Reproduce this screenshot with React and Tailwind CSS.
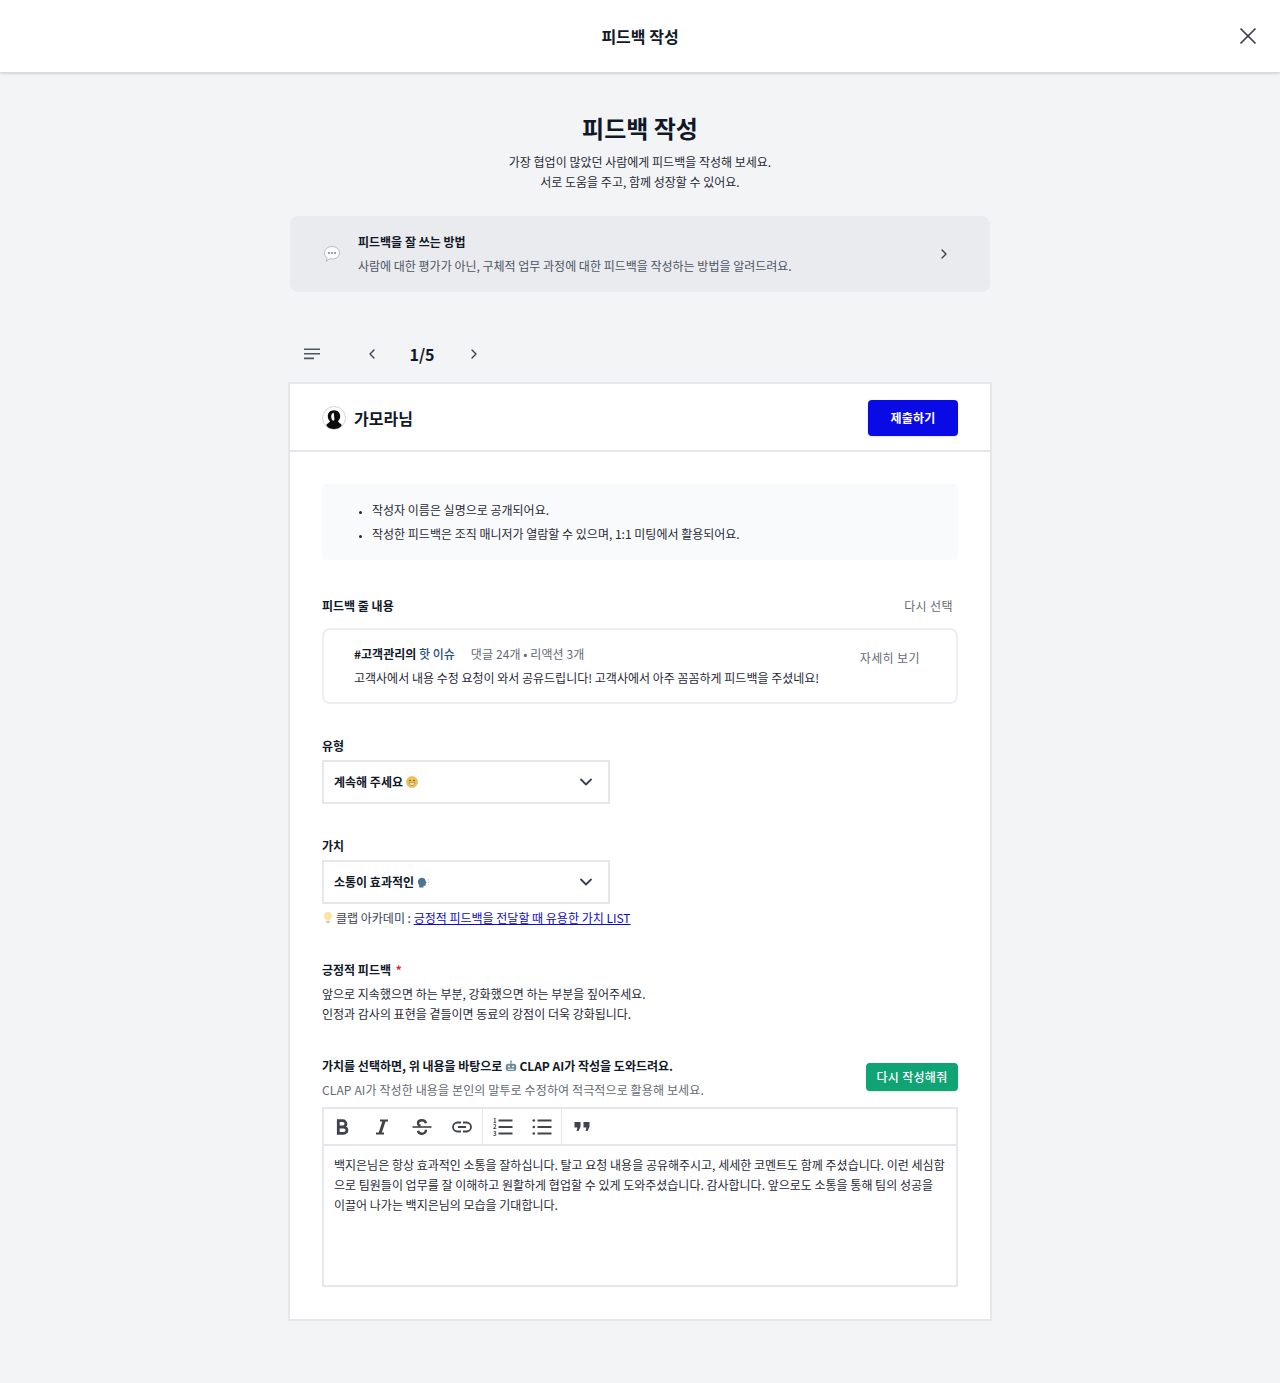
import { X, ChevronRight, ChevronLeft, ChevronDown } from "lucide-react";

function Bubble() {
  return (
    <svg viewBox="0 0 18 18" className="h-[18px] w-[18px]">
      <path d="M9 1.500c4.300 0 7.500 2.800 7.500 6.300s-3.200 6.200-7.500 6.200c-.9 0-1.700-.1-2.500-.3L3.200 16.500l.9-3.600C2.400 11.700 1.500 9.900 1.500 7.800 1.500 4.300 4.700 1.500 9 1.500z" fill="#fbfbfc" stroke="#b9bec4" strokeWidth="1" />
      <circle cx="6" cy="8" r=".9" fill="#6b7280" />
      <circle cx="9" cy="8" r=".9" fill="#6b7280" />
      <circle cx="12" cy="8" r=".9" fill="#6b7280" />
    </svg>
  );
}

function Avatar() {
  return (
    <svg viewBox="0 0 24 24" className="h-6 w-6">
      <circle cx="12" cy="12" r="11.500" fill="#fff" stroke="#d1d5db" />
      <path d="M12 4.300c-3.900 0-6.400 2.800-6.200 6.200.1 2 1 3.500 2.200 4.800-.5 1.300-2.600 2.200-3.800 3.700C5.800 22 8.700 23 12 23s6.200-1 7.800-4c-1.200-1.500-3.300-2.400-3.800-3.700 1.200-1.300 2.100-2.800 2.200-4.800.2-3.400-2.300-6.200-6.200-6.200z" fill="#0b0b0b" />
      <path d="M11.500 6.800c-1.700.4-2.500 2.300-2.300 4.400.2 1.800 1.200 3.400 2.400 3.600 1-.5.9-1.800.6-3.500-.2-1.600 0-3.200-.7-4.500z" fill="#f4f4f4" />
    </svg>
  );
}

function Smile() {
  return (
    <svg viewBox="0 0 12 12" className="h-3 w-3">
      <circle cx="6" cy="6" r="5.500" fill="#f2c34e" stroke="#d9a233" strokeWidth=".5" />
      <circle cx="4" cy="4.500" r=".8" fill="#5b4318" />
      <circle cx="8" cy="4.500" r=".8" fill="#5b4318" />
      <path d="M3 6.800h6c-.3 1.700-1.500 2.700-3 2.700S3.300 8.500 3 6.800z" fill="#fff6dc" stroke="#7a5a1e" strokeWidth=".5" />
    </svg>
  );
}

function Speaking() {
  return (
    <svg viewBox="0 0 12 12" className="h-[13px] w-[13px]">
      <path d="M4.500 1.500c2.200 0 3.500 1.500 3.500 3.200l.9 1.800-.9.400v1.300c0 .6-.5.9-1.100.9H6v1.400H2V8.200C1.200 7.400.8 6.400.8 5.300.8 3.100 2.400 1.500 4.500 1.500z" fill="#4f7390" />
      <path d="M10 3.500h1M10 5.800h1.500M10 8h1" stroke="#b9c4cd" strokeWidth=".9" />
    </svg>
  );
}

function Bulb() {
  return (
    <svg viewBox="0 0 12 14" className="h-[14px] w-3">
      <path d="M6 1C3.600 1 2 2.700 2 4.800c0 1.700 1.300 2.600 1.800 4.200h4.400C8.700 7.400 10 6.500 10 4.800 10 2.700 8.400 1 6 1z" fill="#fbe6a0" />
      <rect x="4.200" y="9.500" width="3.600" height="2.600" rx=".6" fill="#c9ced4" />
    </svg>
  );
}

function Robot() {
  return (
    <svg viewBox="0 0 12 12" className="h-3 w-3">
      <circle cx="6" cy="1.500" r="1" fill="#7f98a6" />
      <rect x="5.500" y="2" width="1" height="2" fill="#7f98a6" />
      <rect x=".8" y="3.800" width="10.400" height="7.200" rx="2.500" fill="#6f8b9b" />
      <circle cx="4" cy="6.500" r="1.100" fill="#eef3f5" />
      <circle cx="8" cy="6.500" r="1.100" fill="#eef3f5" />
      <rect x="3" y="8.700" width="6" height="1.300" fill="#dce4e8" />
    </svg>
  );
}

const toolIcon = "h-5 w-5 text-[#3f444b]";

function BoldIcon() {
  return (
    <svg viewBox="0 0 20 20" fill="none" stroke="currentColor" strokeWidth="2.800" className={toolIcon}>
      <path d="M6.300 3.700h4.500a3.150 3.150 0 0 1 0 6.300H6.300zM6.300 10h5.500a3.150 3.150 0 0 1 0 6.300H6.300z" />
    </svg>
  );
}

function ItalicIcon() {
  return (
    <svg viewBox="0 0 20 20" fill="none" stroke="currentColor" className={toolIcon}>
      <path d="M8 3.500h8M4 16.500h8" strokeWidth="2" />
      <path d="M12.200 3.500 8 16.500" strokeWidth="3" />
    </svg>
  );
}

function StrikeIcon() {
  return (
    <svg viewBox="0 0 20 20" fill="none" stroke="currentColor" className={toolIcon}>
      <path d="M.5 10h19" strokeWidth="1.600" />
      <path d="M14 6.200C13.500 4 11.800 3.200 10 3.200 7.600 3.200 6 4.400 6 6.200c0 1.300.8 2.200 2.500 2.800M14 12.800c0 2.400-1.800 4-4 4-2.200 0-3.600-1-4-3" strokeWidth="2.400" />
    </svg>
  );
}

function LinkIcon() {
  return (
    <svg viewBox="0 0 20 20" fill="none" stroke="currentColor" strokeWidth="1.800" className={toolIcon}>
      <path d="M9 5.500H5.500a4.500 4.500 0 0 0 0 9H9M11 5.500h3.500a4.500 4.500 0 0 1 0 9H11M6 10h8" />
    </svg>
  );
}

function OrderedIcon() {
  return (
    <svg viewBox="0 0 20 20" className={toolIcon}>
      <path d="M5.500 3.500h14M5.500 10h14M5.500 16.500h14" stroke="currentColor" strokeWidth="1.800" />
      <text x="0" y="5.500" fontSize="6" fontWeight="700" fill="currentColor">1</text>
      <text x="0" y="12" fontSize="6" fontWeight="700" fill="currentColor">2</text>
      <text x="0" y="18.500" fontSize="6" fontWeight="700" fill="currentColor">3</text>
    </svg>
  );
}

function BulletIcon() {
  return (
    <svg viewBox="0 0 20 20" className={toolIcon}>
      <path d="M5.500 3.500h14M5.500 10h14M5.500 16.500h14" stroke="currentColor" strokeWidth="1.800" />
      <circle cx="1.800" cy="3.500" r="1.300" fill="currentColor" />
      <circle cx="1.800" cy="10" r="1.300" fill="currentColor" />
      <circle cx="1.800" cy="16.500" r="1.300" fill="currentColor" />
    </svg>
  );
}

function QuoteIcon() {
  return (
    <svg viewBox="0 0 16 9" className="h-[9px] w-4 text-[#3f444b]">
      <path d="M.5 0h6v4.800L4.500 9H2.500l1-3.500h-3zM9.500 0h6v4.800L13.500 9h-2l1-3.500h-3z" fill="currentColor" />
    </svg>
  );
}

function Tool({ children }) {
  return <span className="flex h-full w-10 items-center justify-center">{children}</span>;
}

function Select({ children }) {
  return (
    <div className="flex h-11 w-72 items-center justify-between border-2 border-[#e5e7eb] bg-white pl-2.5 pr-3">
      <span className="flex items-center gap-[3px] text-xs font-bold text-[#111827]">{children}</span>
      <ChevronDown className="h-5 w-5 text-[#374151]" strokeWidth={2.2} />
    </div>
  );
}

export default function App() {
  return (
    <div className="min-h-[1383px] bg-[#f3f4f6] font-['Noto_Sans_CJK_KR','Noto_Sans',sans-serif] text-[#111827]">
      <header className="relative flex h-[73px] items-center justify-center border-b border-[#d9dbde] bg-white shadow-sm">
        <h1 className="text-base font-semibold">피드백 작성</h1>
        <X className="absolute right-[18px] top-[22px] h-7 w-7 text-[#374151]" strokeWidth={1.5} />
      </header>

      <main className="mx-auto w-[704px] pt-[39px]">
        <h2 className="text-center text-2xl font-bold leading-8">피드백 작성</h2>
        <p className="mt-2 text-center text-xs leading-5 text-[#1f2937]">
          가장 협업이 많았던 사람에게 피드백을 작성해 보세요.
          <br />
          서로 도움을 주고, 함께 성장할 수 있어요.
        </p>

        <div className="mx-0.5 mt-6 flex h-[76px] items-center rounded-lg bg-[#e9ebee] pl-[33px] pr-[38px]">
          <Bubble />
          <div className="ml-[17px] flex-1">
            <p className="text-xs font-bold leading-5">피드백을 잘 쓰는 방법</p>
            <p className="mt-1 text-xs leading-5 text-[#4b5563]">사람에 대한 평가가 아닌, 구체적 업무 과정에 대한 피드백을 작성하는 방법을 알려드려요.</p>
          </div>
          <ChevronRight className="h-4 w-4 text-[#374151]" strokeWidth={2} />
        </div>

        <div className="mb-1 mt-[38px] flex h-12 items-center pl-[16px]">
          <svg viewBox="0 0 16 12" className="h-3 w-4">
            <path d="M0 1.200h16M0 5.800h16M0 10.400h10" stroke="#4b5563" strokeWidth="1.600" />
          </svg>
          <ChevronLeft className="ml-[44px] h-4 w-4 text-[#374151]" strokeWidth={2} />
          <span className="ml-[29px] w-[26px] text-center text-base font-semibold">1/5</span>
          <ChevronRight className="ml-[31px] h-4 w-4 text-[#374151]" strokeWidth={2} />
        </div>

        <section className="border-2 border-[#e5e7eb] bg-white">
          <div className="flex h-[68px] items-center justify-between border-b-2 border-[#e5e7eb] pl-8 pr-8 pt-0.5">
            <div className="flex items-center gap-2">
              <Avatar />
              <span className="text-base font-semibold">가모라님</span>
            </div>
            <button className="h-9 w-[90px] rounded bg-[#0a0ae6] text-xs font-bold tracking-[0.2px] text-white shadow">제출하기</button>
          </div>

          <div className="px-8 pb-8 pt-8">
            <ul className="flex h-[76px] flex-col justify-center gap-0.5 rounded bg-[#f9fafb] pl-[37px] pt-0.5 text-xs leading-5 text-[#1f2937]">
              <li className="list-inside list-disc marker:text-[9px]">작성자 이름은 실명으로 공개되어요.</li>
              <li className="list-inside list-disc marker:text-[9px]">작성한 피드백은 조직 매니저가 열람할 수 있으며, 1:1 미팅에서 활용되어요.</li>
            </ul>

            <div className="mt-9 flex items-center justify-between pr-[5px]">
              <h3 className="text-xs font-bold leading-5">피드백 줄 내용</h3>
              <span className="text-xs leading-5 tracking-[0.4px] text-[#636a75]">다시 선택</span>
            </div>
            <div className="mt-3 flex h-[76px] items-center justify-between rounded-lg border-2 border-[#eceef1] pl-[30px] pr-9">
              <div>
                <p className="text-xs leading-5">
                  <b className="font-bold">#고객관리의</b> <span className="font-medium text-[#1f4f78]">핫 이슈</span>
                  <span className="ml-4 tracking-[0.1px] text-[#636a75]">댓글 24개 • 리액션 3개</span>
                </p>
                <p className="mt-1 text-xs leading-5 text-[#1f2937]">고객사에서 내용 수정 요청이 와서 공유드립니다! 고객사에서 아주 꼼꼼하게 피드백을 주셨네요!</p>
              </div>
              <span className="mb-4 text-xs tracking-[0.4px] text-[#636a75]">자세히 보기</span>
            </div>

            <h3 className="mt-8 text-xs font-bold leading-5">유형</h3>
            <div className="mt-1">
              <Select>계속해 주세요 <Smile /></Select>
            </div>

            <h3 className="mt-8 text-xs font-bold leading-5">가치</h3>
            <div className="mt-1">
              <Select>소통이 효과적인 <Speaking /></Select>
            </div>
            <p className="mt-1 flex items-center gap-0.5 text-xs leading-5 text-[#374151]">
              <Bulb />
              <span>
                클랩 아카데미 : <a className="text-[#0a0ad0] underline">긍정적 피드백을 전달할 때 유용한 가치 LIST</a>
              </span>
            </p>

            <h3 className="mt-8 text-xs font-bold leading-5">
              긍정적 피드백 <span className="ml-0.5 text-[#dc2626]">*</span>
            </h3>
            <p className="mt-1 text-xs leading-5 text-[#1f2937]">
              앞으로 지속했으면 하는 부분, 강화했으면 하는 부분을 짚어주세요.
              <br />
              인정과 감사의 표현을 곁들이면 동료의 강점이 더욱 강화됩니다.
            </p>

            <div className="mt-8 flex items-center justify-between">
              <div>
                <p className="flex items-center gap-[2.5px] text-xs font-bold leading-5">
                  가치를 선택하면, 위 내용을 바탕으로 <Robot /> CLAP AI가 작성을 도와드려요.
                </p>
                <p className="mt-1 text-xs leading-5 tracking-[0.12px] text-[#636a75]">CLAP AI가 작성한 내용을 본인의 말투로 수정하여 적극적으로 활용해 보세요.</p>
              </div>
              <button className="mb-0.5 h-7 w-[92px] rounded bg-[#10a374] text-xs font-medium tracking-[0.3px] text-white shadow">다시 작성해줘</button>
            </div>

            <div className="mt-[7px] border-2 border-[#e5e7eb]">
              <div className="flex h-[37px] items-center border-b-2 border-[#e5e7eb]">
                <div className="-ml-0.5 flex h-full w-40 shrink-0 items-center">
                  <Tool><BoldIcon /></Tool>
                  <Tool><ItalicIcon /></Tool>
                  <Tool><StrikeIcon /></Tool>
                  <Tool><LinkIcon /></Tool>
                </div>
                <div className="flex h-full w-20 shrink-0 items-center border-x border-[#e5e7eb]">
                  <Tool><OrderedIcon /></Tool>
                  <Tool><BulletIcon /></Tool>
                </div>
                <Tool><QuoteIcon /></Tool>
              </div>
              <div className="h-[139px] px-2.5 pt-[9px] text-xs leading-5 text-[#1f2937]">
                백지은님은 항상 효과적인 소통을 잘하십니다. 탈고 요청 내용을 공유해주시고, 세세한 코멘트도 함께 주셨습니다. 이런 세심함으로 팀원들이 업무를 잘 이해하고 원활하게 협업할 수 있게 도와주셨습니다. 감사합니다. 앞으로도 소통을 통해 팀의 성공을 이끌어 나가는 백지은님의 모습을 기대합니다.
              </div>
            </div>
          </div>
        </section>
      </main>
    </div>
  );
}
